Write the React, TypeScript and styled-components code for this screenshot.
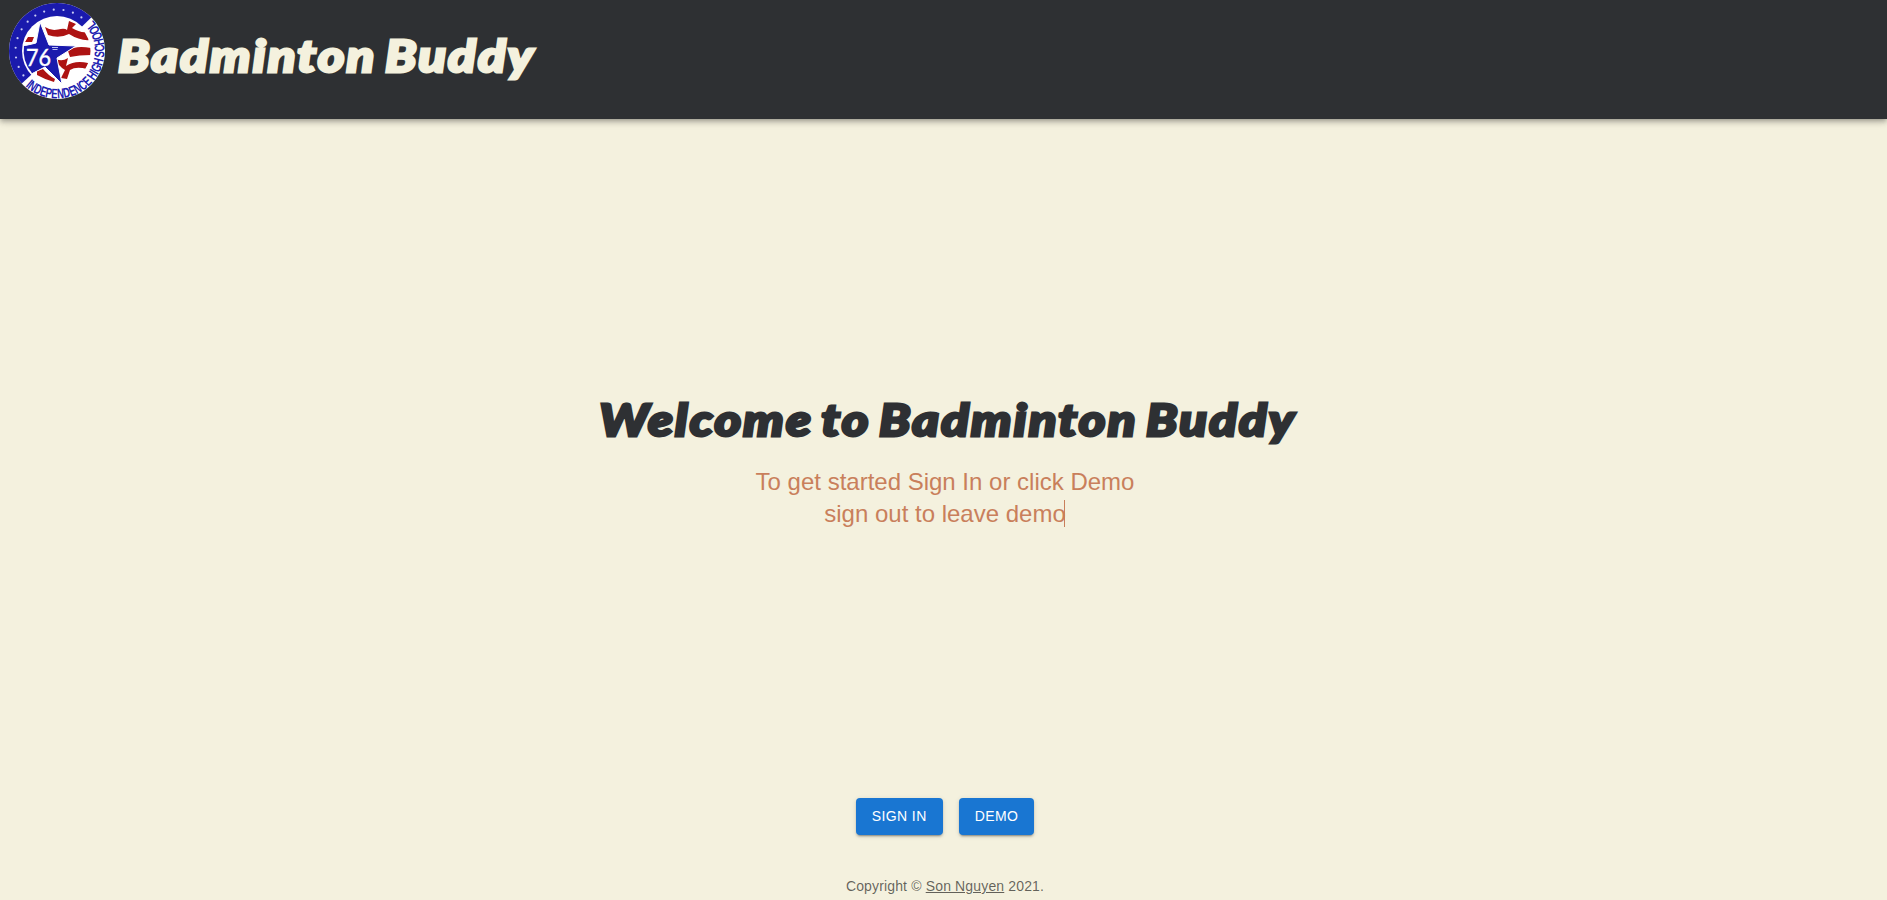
import React from "react";
import styled, { createGlobalStyle } from "styled-components";

const ink = "#2e3033";
const cream = "#f4f1de";
const clay = "#c97f5b";

const GlobalStyle = createGlobalStyle`
  *, *::before, *::after { box-sizing: border-box; }
  body {
    margin: 0;
    background: ${cream};
    font-family: "Liberation Sans", Arial, sans-serif;
    overflow: hidden;
  }
`;

const Page = styled.div`
  display: flex;
  flex-direction: column;
  height: 900px;
`;

const Header = styled.header`
  display: flex;
  align-items: flex-start;
  height: 119px;
  padding: 3px 0 0 9px;
  background: ${ink};
  box-shadow: 0 2px 4px -1px rgba(0, 0, 0, 0.2), 0 4px 5px rgba(0, 0, 0, 0.14),
    0 1px 10px rgba(0, 0, 0, 0.12);
`;

const Crest = styled.svg`
  width: 96px;
  height: 96px;
  flex: none;
`;

const Display = styled.h1<{ $color: string; $origin: string }>`
  margin: 0;
  font: italic 900 44px/56px Lato, "Open Sans", sans-serif;
  letter-spacing: 1.9px;
  word-spacing: -4px;
  color: ${(p) => p.$color};
  -webkit-text-stroke: 2.8px ${(p) => p.$color};
  white-space: nowrap;
  transform: scaleX(1.155);
  transform-origin: ${(p) => p.$origin} center;
`;

const Brand = styled.div`
  margin: 24px 0 0 13px;
`;

const Main = styled.main`
  display: flex;
  flex: 1;
  flex-direction: column;
  align-items: center;
  padding-top: 272px;
`;

const Heading = styled.div`
  margin-left: 9px;
`;

const Lead = styled.p`
  margin: 19px 0 0;
  padding-left: 3px;
  font-size: 24px;
  line-height: 32px;
  text-align: center;
  color: ${clay};
`;

const Caret = styled.span`
  display: inline-block;
  width: 1px;
  height: 27px;
  margin-left: -2px;
  margin-right: 1px;
  vertical-align: -5px;
  background: ${clay};
`;

const Actions = styled.div`
  display: flex;
  gap: 16px;
  margin-top: auto;
  padding-left: 3px;
`;

const Button = styled.button`
  height: 37px;
  padding: 6px 16px;
  border: 0;
  border-radius: 4px;
  background: #1976d2;
  color: #fff;
  font: 500 14px/24.5px "Liberation Sans", Arial, sans-serif;
  letter-spacing: 0.4px;
  text-transform: uppercase;
  box-shadow: 0 3px 1px -2px rgba(0, 0, 0, 0.2), 0 2px 2px rgba(0, 0, 0, 0.14),
    0 1px 5px rgba(0, 0, 0, 0.12);
`;

const Footer = styled.footer`
  margin-top: 41px;
  height: 24px;
  padding-left: 3px;
  font-size: 14px;
  line-height: 20px;
  letter-spacing: 0.15px;
  text-align: center;
  color: rgba(0, 0, 0, 0.6);
`;

const AuthorLink = styled.a`
  color: inherit;
  text-decoration: underline;
`;

const starAngles = Array.from({ length: 13 }, (_, i) => 144 + i * 13.5);

function SchoolCrest() {
  return (
    <Crest viewBox="9 3 96 96" aria-label="Independence High School">
      <defs>
        <clipPath id="disc">
          <circle cx="57" cy="51" r="48" />
        </clipPath>
        <clipPath id="field">
          <circle cx="57" cy="51" r="33.5" />
        </clipPath>
        <path id="rim" d="M25.2 86.3A47.5 47.5 0 1 0 87.5 14.6" />
      </defs>
      <circle cx="57" cy="51" r="48" fill="#fff" />
      <path d="M5 0H109L57 51L18 87H5Z" fill="#1a1aad" clipPath="url(#disc)" />
      <circle cx="57" cy="51" r="35" fill="#fff" />
      {starAngles.map((a) => (
        <circle
          key={a}
          cx={57 + 41.5 * Math.cos((a * Math.PI) / 180)}
          cy={51 + 41.5 * Math.sin((a * Math.PI) / 180)}
          r="1.1"
          fill="#c9cdf5"
        />
      ))}
      <g clipPath="url(#field)" fill="#ad1313">
        <path d="M45 27Q51 31 58 29.500T67 30L69 21L76 24L72 28Q80 33 87 32L90 40Q80 41 69 34Q59 39 48 35Z" />
        <path d="M68 51Q75 45 91 48V55Q79 55 70 57Z" />
        <path d="M56 59Q62 62 68 58L66 66Q75 60 88 63L87 69Q76 66 70 70L67 79L61 78L65 70Q58 66 56 59Z" />
        <path d="M28 37L34 37L32 42L25 42ZM37 71L43 69Q49 76 55 79L54 82Q44 79 37 75Z" />
      </g>
      <path
        d="M40 22L49 45L76 46L57 58L62 84L45 67L31 74L34 59L24 46L36 43Z"
        fill="#1a1aad"
        stroke="#fff"
        strokeWidth="1"
      />
      <path d="M24 46A34 34 0 0 0 32 73L46 65L41 45Z" fill="#1a1aad" />
      <text x="26" y="66" fill="#fff" stroke="#fff" strokeWidth="0.4" fontFamily="Lato, sans-serif" fontSize="23" textLength="25" lengthAdjust="spacingAndGlyphs">
        76
      </text>
      <path d="M52 47.5H58M52.5 49.5H57.5" stroke="#b9bdf0" strokeWidth="1.2" />
      <text fill="#2020b0" fontFamily="Liberation Sans Narrow, Liberation Sans, sans-serif" fontWeight="700" wordSpacing="-1" fontSize="14">
        <textPath href="#rim" textLength="143" lengthAdjust="spacingAndGlyphs">
          INDEPENDENCE HIGH SCHOOL
        </textPath>
      </text>
    </Crest>
  );
}

export default function App() {
  return (
    <>
      <GlobalStyle />
      <Page>
        <Header>
          <SchoolCrest />
          <Brand>
            <Display as="div" $color={cream} $origin="left">
              Badminton Buddy
            </Display>
          </Brand>
        </Header>
        <Main>
          <Heading>
            <Display $color={ink} $origin="center">
              Welcome to Badminton Buddy
            </Display>
          </Heading>
          <Lead>
            To get started Sign In or click Demo
            <br />
            sign out to leave demo
            <Caret />
          </Lead>
          <Actions>
            <Button>Sign In</Button>
            <Button>Demo</Button>
          </Actions>
        </Main>
        <Footer>
          Copyright © <AuthorLink>Son Nguyen</AuthorLink> 2021.
        </Footer>
      </Page>
    </>
  );
}
